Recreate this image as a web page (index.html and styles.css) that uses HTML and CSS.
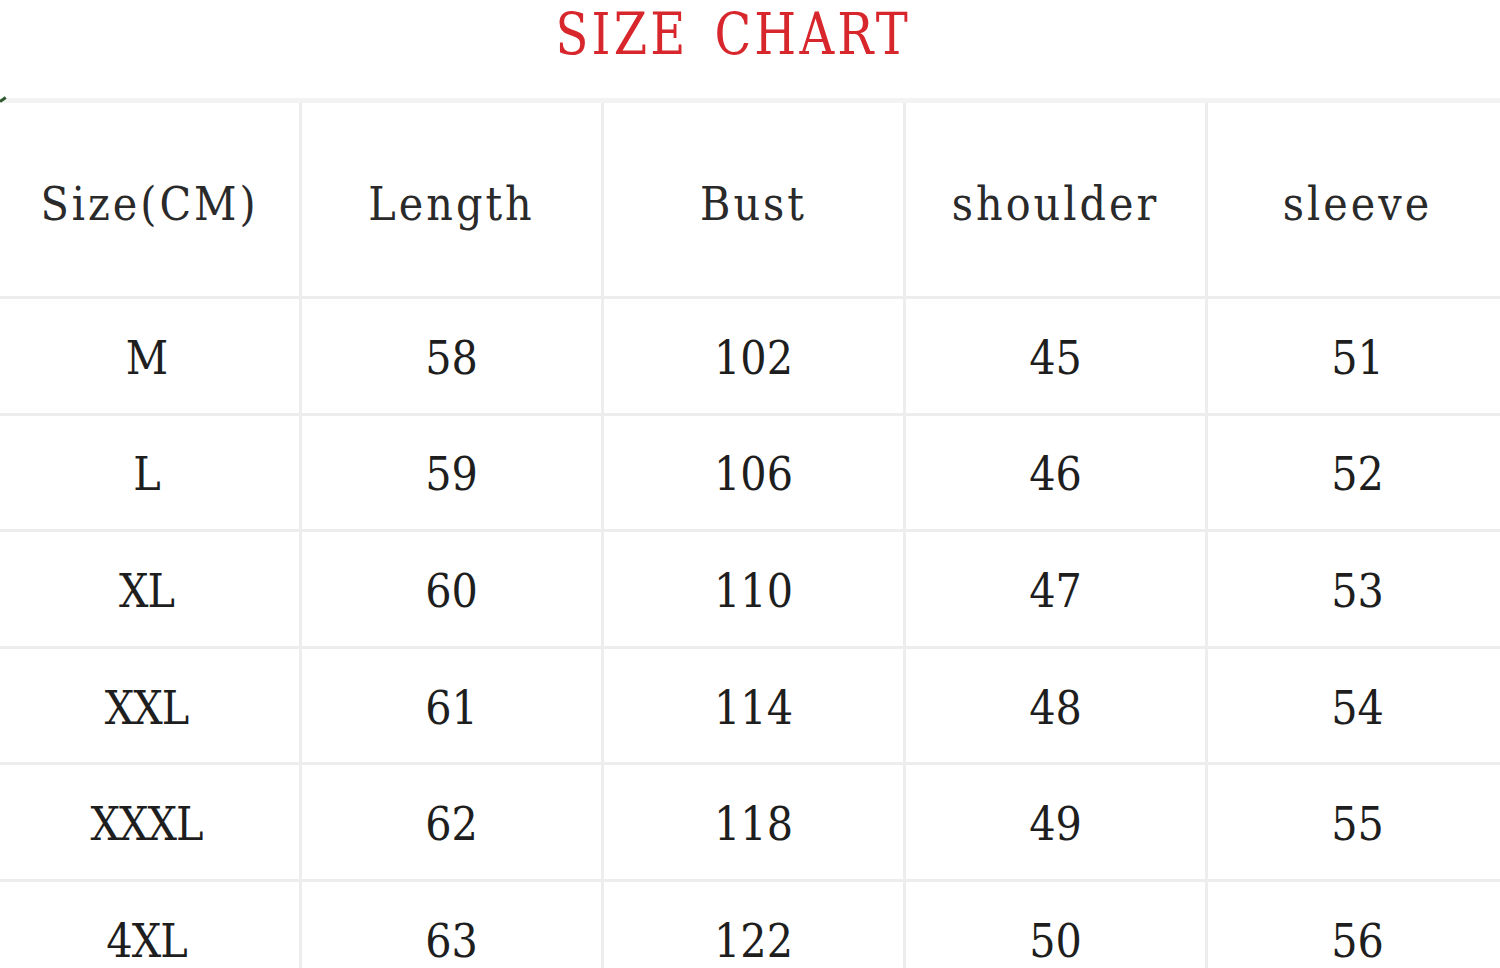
FILE: index.html
```html
<!DOCTYPE html>
<html>
<head>
<meta charset="utf-8">
<title>Size Chart</title>
<link rel="stylesheet" href="styles.css">
</head>
<body>
<div class="page">
  <h1 class="title"><span class="title-text">SIZE CHART</span></h1>
  <div class="chart">
    <div class="cell head">Size(CM)</div>
    <div class="cell head">Length</div>
    <div class="cell head">Bust</div>
    <div class="cell head">shoulder</div>
    <div class="cell head">sleeve</div>

    <div class="cell size">M</div>
    <div class="cell">58</div>
    <div class="cell">102</div>
    <div class="cell">45</div>
    <div class="cell">51</div>

    <div class="cell size">L</div>
    <div class="cell">59</div>
    <div class="cell">106</div>
    <div class="cell">46</div>
    <div class="cell">52</div>

    <div class="cell size">XL</div>
    <div class="cell">60</div>
    <div class="cell">110</div>
    <div class="cell">47</div>
    <div class="cell">53</div>

    <div class="cell size">XXL</div>
    <div class="cell">61</div>
    <div class="cell">114</div>
    <div class="cell">48</div>
    <div class="cell">54</div>

    <div class="cell size">XXXL</div>
    <div class="cell">62</div>
    <div class="cell">118</div>
    <div class="cell">49</div>
    <div class="cell">55</div>

    <div class="cell size">4XL</div>
    <div class="cell">63</div>
    <div class="cell">122</div>
    <div class="cell">50</div>
    <div class="cell">56</div>
  </div>
</div>
</body>
</html>
```
FILE: styles.css
```css
html, body {
  margin: 0;
  padding: 0;
  background: #ffffff;
  overflow: hidden;
}

.page {
  width: 1500px;
  height: 968px;
  overflow: hidden;
  position: relative;
}

.title {
  margin: 0;
  height: 98px;
  box-sizing: border-box;
  padding-right: 33px;
  text-align: center;
  font-family: "DejaVu Serif Condensed", "DejaVu Serif", serif;
  font-stretch: condensed;
  font-weight: normal;
  font-size: 58px;
  line-height: 68px;
  color: #d7262c;
}

.title-text {
  display: inline-block;
  letter-spacing: 3.5px;
  word-spacing: 8px;
  transform: scaleX(0.92);
}

.chart {
  position: relative;
  display: grid;
  grid-template-columns: repeat(5, 302px);
  grid-template-rows: 196px;
  grid-auto-rows: 116.6px;
  width: 1510px;
  border-top: 5px solid #f3f3f3;
}

.chart::before {
  content: "";
  position: absolute;
  left: 0;
  top: -3px;
  width: 7px;
  height: 3px;
  background: #2e5a2e;
  transform: rotate(-35deg);
  transform-origin: left center;
}

.cell {
  box-sizing: border-box;
  border-right: 3px solid #ededed;
  border-bottom: 3px solid #ededed;
  display: flex;
  align-items: center;
  justify-content: center;
  font-family: "DejaVu Serif Condensed", "DejaVu Serif", serif;
  font-stretch: condensed;
  font-size: 46px;
  color: #1e1e1e;
  padding-top: 4px;
}

.head {
  letter-spacing: 3px;
  color: #2a2a2a;
  padding-top: 8px;
}

.size {
  letter-spacing: -1px;
  padding-right: 6px;
}
```
